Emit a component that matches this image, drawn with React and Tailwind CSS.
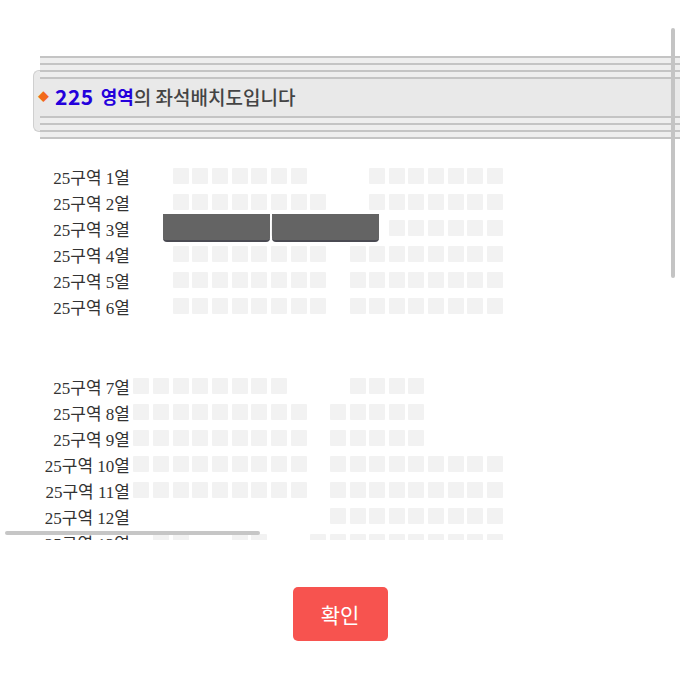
import React from "react";

// seat columns per row, as [from, to] ranges on a 19-column grid
const upperRows = [
  { no: 1, ranges: [[2, 8], [12, 18]] },
  { no: 2, ranges: [[2, 9], [12, 18]] },
  { no: 3, ranges: [[2, 9], [13, 18]] },
  { no: 4, ranges: [[2, 9], [11, 18]] },
  { no: 5, ranges: [[2, 9], [11, 18]] },
  { no: 6, ranges: [[2, 9], [11, 18]] },
];

const lowerRows = [
  { no: 7, ranges: [[0, 7], [11, 14]] },
  { no: 8, ranges: [[0, 8], [10, 14]] },
  { no: 9, ranges: [[0, 8], [10, 14]] },
  { no: 10, ranges: [[0, 8], [10, 18]] },
  { no: 11, ranges: [[0, 8], [10, 18]] },
  { no: 12, ranges: [[10, 18]] },
  { no: 13, ranges: [[1, 2], [5, 6], [9, 18]] },
];

function hasSeat(ranges, k) {
  return ranges.some(([a, b]) => k >= a && k <= b);
}

function SeatRow({ no, ranges }) {
  return (
    <div className="flex h-[26px] items-start">
      <div className="w-[130px] flex-none text-right text-[17px] leading-[27px] text-[#333] font-['Liberation_Serif','Noto_Sans_CJK_KR',serif] whitespace-nowrap">
        25구역 {no}열
      </div>
      <div className="ml-[3.3px] flex">
        {Array.from({ length: 19 }).map((_, k) => (
          <div key={k} className="w-[19.67px] flex-none pt-[3px]">
            {hasSeat(ranges, k) && (
              <div className="w-[16px] h-[16px] bg-[#f2f2f2] rounded-[1px]" />
            )}
          </div>
        ))}
      </div>
    </div>
  );
}

function Lines() {
  return (
    <div className="flex flex-col gap-[5px] bg-[#eeeeee]">
      <div className="h-[2px] bg-[#c4c4c4]" />
      <div className="h-[2px] bg-[#c4c4c4]" />
      <div className="h-[2px] bg-[#c4c4c4]" />
      <div className="h-[2px] bg-[#c4c4c4]" />
    </div>
  );
}

export default function App() {
  return (
    <div className="relative w-[680px] h-[677px] bg-white overflow-hidden font-['Noto_Sans_CJK_KR',sans-serif]">
      {/* Scroll area */}
      <div className="relative h-[540px] overflow-hidden">
        {/* Header band */}
        <div className="relative mt-[56px] ml-[40px]">
          <div className="absolute left-[-7px] top-[14px] h-[62px] w-[12px] rounded-l-[6px] border border-r-0 border-[#cfcfcf] bg-[#e9e9e9]" />
          <div className="relative">
            <Lines />
            <div className="flex h-[37px] items-center pb-[3px] bg-[#e9e9e9]">
              <span className="text-[#f26a1b] text-[11px] leading-none mr-[6px] -ml-[2px]">◆</span>
              <span className="text-[21px] leading-none font-bold text-[#2400dc] tracking-[0.5px]">225</span>
              <span className="ml-[7px] text-[18px] leading-none font-bold text-[#2400dc]">영역</span>
              <span className="text-[19px] leading-none font-medium text-[#444]">의 좌석배치도입니다</span>
            </div>
            <Lines />
          </div>
        </div>

        {/* Seat map */}
        <div className="relative mt-[26px]">
          {upperRows.map((r) => (
            <SeatRow key={r.no} {...r} />
          ))}
          <div className="h-[54px]" />
          {lowerRows.map((r) => (
            <SeatRow key={r.no} {...r} />
          ))}

          {/* Overlay bars on row 3 */}
          <div className="absolute left-[163px] top-[49px] flex gap-[2px]">
            <div className="w-[107px] h-[28px] bg-[#646464] rounded-b-[4px] border-b-2 border-[#4a4a52]" />
            <div className="w-[107px] h-[28px] bg-[#646464] rounded-b-[4px] border-b-2 border-[#4a4a52]" />
          </div>
        </div>

        {/* Horizontal scrollbar */}
        <div className="absolute left-[5px] top-[531px] w-[255px] h-[4px] rounded-full bg-[#c6c6c6]" />
      </div>

      {/* Vertical scrollbar */}
      <div className="absolute left-[671px] top-[28px] w-[4px] h-[250px] rounded-full bg-[#c4c4c4]" />

      {/* Confirm button */}
      <div className="flex justify-center mt-[47px]">
        <button className="w-[95px] h-[54px] rounded-[5px] bg-[#f7534f] text-white text-[21px] leading-none">
          확인
        </button>
      </div>
    </div>
  );
}
